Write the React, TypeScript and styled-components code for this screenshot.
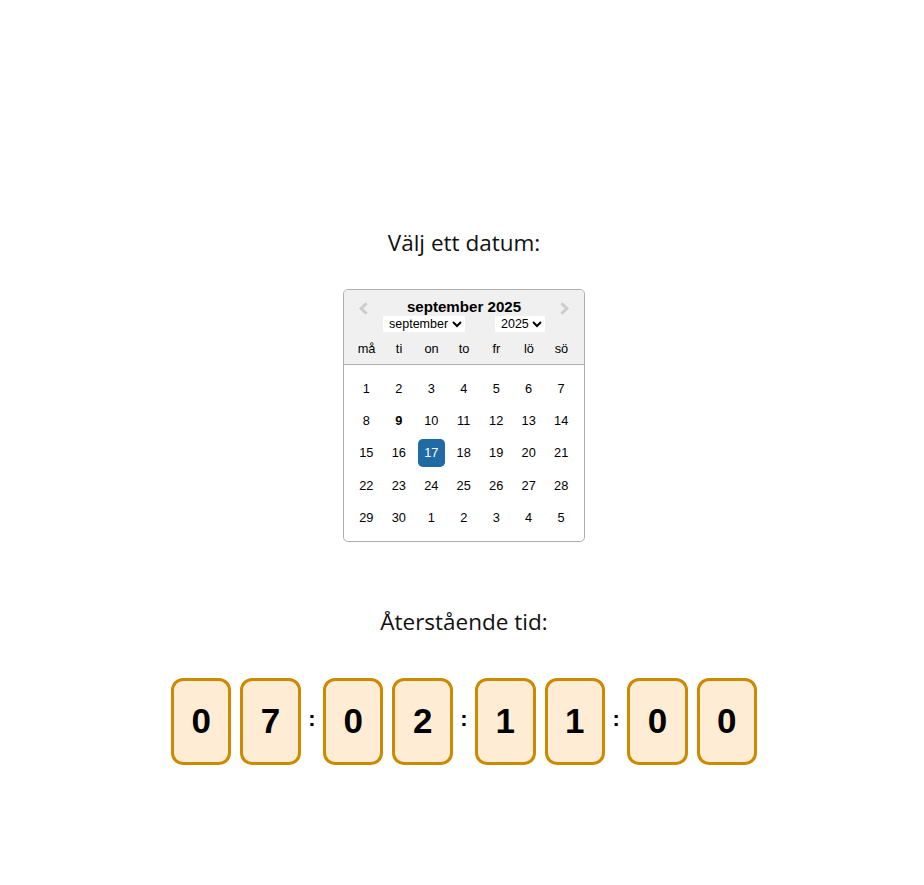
import React, { useState } from "react";
import styled, { createGlobalStyle } from "styled-components";

const Global = createGlobalStyle`
  html, body { margin: 0; padding: 0; background: #fff; }
  body { font-family: "Open Sans", "Noto Sans", sans-serif; color: #000; }
`;

const Page = styled.div`
  display: flex;
  flex-direction: column;
  align-items: center;
  padding: 228px 0 0 4px;
`;

const Heading = styled.div`
  font-family: "Open Sans", "Noto Sans", sans-serif;
  font-size: 22.5px;
  line-height: 30px;
  color: #111;
`;

const Calendar = styled.div`
  margin-top: 31px;
  font-family: "Liberation Sans", Arial, sans-serif;
  font-size: 12.8px;
  border: 1px solid #aeaeae;
  border-radius: 4.8px;
  background: #fff;
  position: relative;
  width: 240.6px;
`;

const Header = styled.div`
  background: #f0f0f0;
  border-bottom: 1px solid #aeaeae;
  border-top-left-radius: 4.8px;
  border-top-right-radius: 4.8px;
  padding-top: 8px;
  display: flex;
  flex-direction: column;
  align-items: center;
`;

const MonthTitle = styled.div`
  font-weight: bold;
  font-size: 15.1px;
  line-height: 18px;
`;

const DropRow = styled.div`
  display: flex;
  justify-content: center;
  height: 16px;
`;

const Select = styled.select`
  margin: 0 15px;
  font-family: "Liberation Sans", Arial, sans-serif;
  font-size: 12.5px;
  height: 16px;
  padding: 0 0 0 2px;
  border: none;
  background: #fff;
  color: #000;
  outline: none;
`;

const Row = styled.div`
  display: flex;
`;

const NameCell = styled.div`
  width: 27.2px;
  line-height: 27.2px;
  margin: 2.656px;
  text-align: center;
`;

const Month = styled.div`
  margin: 6.4px;
`;

const DayCell = styled.div<{ $selected?: boolean; $today?: boolean }>`
  width: 27.2px;
  line-height: 27.2px;
  margin: 2.656px;
  text-align: center;
  border-radius: 4.8px;
  font-weight: ${(p) => (p.$today ? "bold" : "normal")};
  background: ${(p) => (p.$selected ? "#216ba5" : "transparent")};
  color: ${(p) => (p.$selected ? "#fff" : "#000")};
`;

const NavButton = styled.button<{ $side: "left" | "right" }>`
  position: absolute;
  top: 3px;
  ${(p) => (p.$side === "left" ? "left: 4px;" : "right: 4px;")}
  width: 32px;
  height: 32px;
  padding: 0;
  border: none;
  background: none;
  display: flex;
  align-items: center;
  justify-content: center;
  &::before {
    content: "";
    display: block;
    width: 6px;
    height: 6px;
    border-color: #ccc;
    border-style: solid;
    border-width: 3px 3px 0 0;
    transform: ${(p) => (p.$side === "left" ? "rotate(225deg)" : "rotate(45deg)")};
    margin-${(p) => (p.$side === "left" ? "left" : "right")}: 4px;
    margin-top: -2px;
  }
`;

const Heading2 = styled(Heading)`
  margin-top: 65px;
`;

const Timer = styled.div`
  margin-top: 41px;
  display: flex;
  align-items: center;
  font-family: "Liberation Sans", Arial, sans-serif;
`;

const DigitBox = styled.div`
  box-sizing: border-box;
  width: 60.4px;
  height: 87px;
  margin: 0 4.5px;
  border: 3.5px solid #cc8a00;
  border-radius: 12px;
  background: #ffecd4;
  display: flex;
  align-items: center;
  justify-content: center;
  font-size: 35px;
  font-weight: bold;
  color: #000;
`;

const Colon = styled.div`
  font-size: 22px;
  font-weight: bold;
  margin: 0 3px;
  padding-bottom: 5px;
`;

const monthNames = [
  "januari", "februari", "mars", "april", "maj", "juni",
  "juli", "augusti", "september", "oktober", "november", "december",
];

const weeks = [
  [1, 2, 3, 4, 5, 6, 7],
  [8, 9, 10, 11, 12, 13, 14],
  [15, 16, 17, 18, 19, 20, 21],
  [22, 23, 24, 25, 26, 27, 28],
  [29, 30, 1, 2, 3, 4, 5],
];

const dayNames = ["må", "ti", "on", "to", "fr", "lö", "sö"];

export default function App() {
  const [month, setMonth] = useState(8);
  const [year, setYear] = useState(2025);
  const groups = ["07", "02", "11", "00"];
  return (
    <>
      <Global />
      <Page>
        <Heading>Välj ett datum:</Heading>
        <Calendar>
          <NavButton $side="left" aria-label="Föregående månad" />
          <NavButton $side="right" aria-label="Nästa månad" />
          <Header>
            <MonthTitle>
              {monthNames[month]} {year}
            </MonthTitle>
            <DropRow>
              <Select value={month} onChange={(e) => setMonth(Number(e.target.value))}>
                {monthNames.map((m, i) => (
                  <option key={m} value={i}>
                    {m}
                  </option>
                ))}
              </Select>
              <Select value={year} onChange={(e) => setYear(Number(e.target.value))}>
                {[2023, 2024, 2025, 2026, 2027].map((y) => (
                  <option key={y} value={y}>
                    {y}
                  </option>
                ))}
              </Select>
            </DropRow>
            <Row>
              {dayNames.map((d) => (
                <NameCell key={d}>{d}</NameCell>
              ))}
            </Row>
          </Header>
          <Month>
            {weeks.map((w, wi) => (
              <Row key={wi}>
                {w.map((d, di) => (
                  <DayCell
                    key={di}
                    $selected={wi === 2 && d === 17}
                    $today={wi === 1 && d === 9}
                  >
                    {d}
                  </DayCell>
                ))}
              </Row>
            ))}
          </Month>
        </Calendar>
        <Heading2>Återstående tid:</Heading2>
        <Timer>
          {groups.map((g, gi) => (
            <React.Fragment key={gi}>
              {gi > 0 && <Colon>:</Colon>}
              {g.split("").map((c, ci) => (
                <DigitBox key={ci}>{c}</DigitBox>
              ))}
            </React.Fragment>
          ))}
        </Timer>
      </Page>
    </>
  );
}
